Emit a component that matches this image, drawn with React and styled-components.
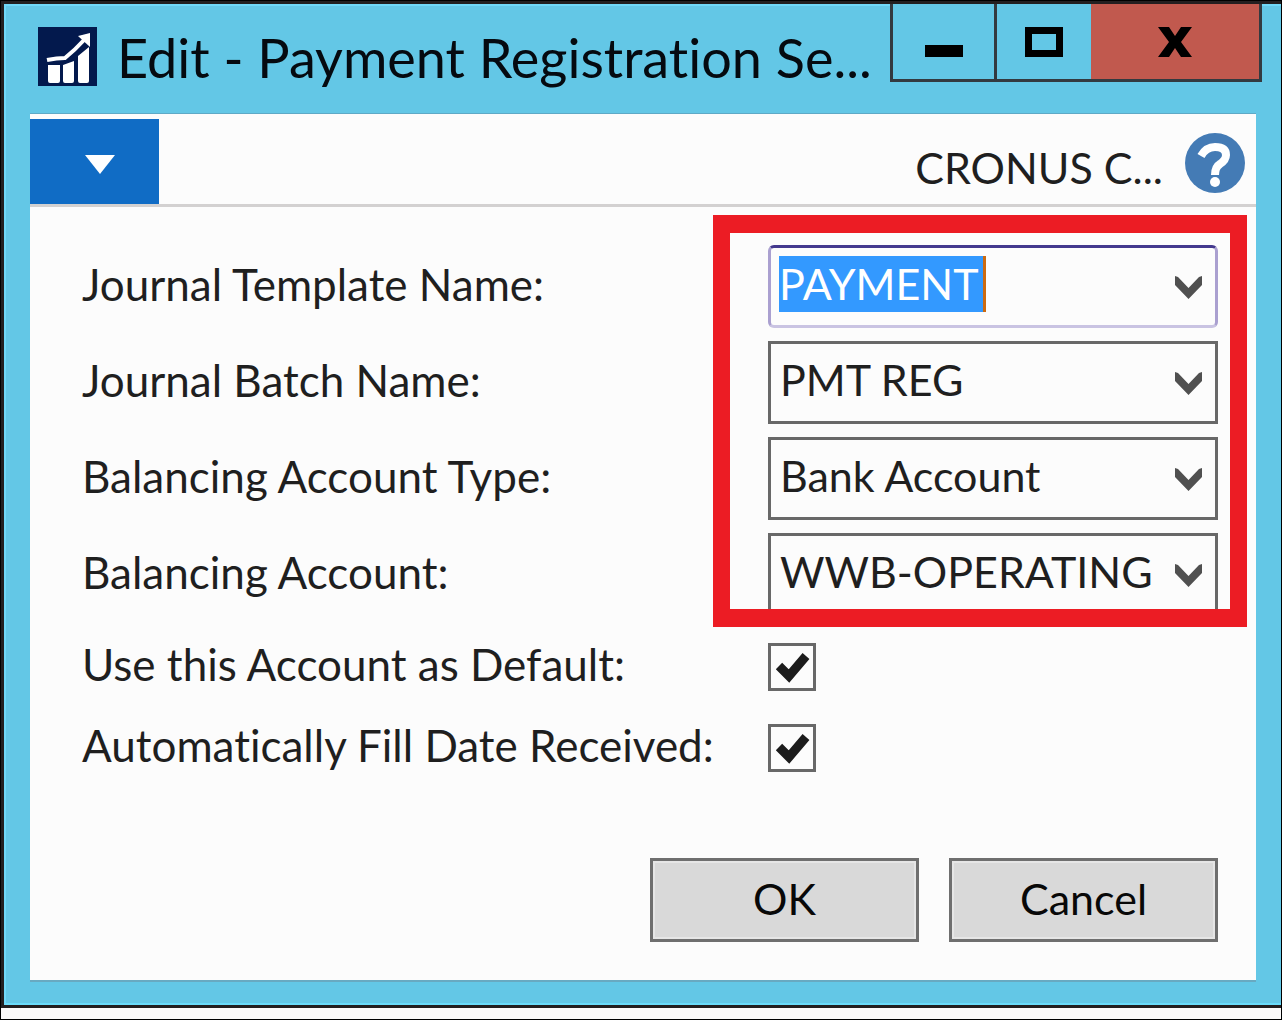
import React, { useState } from "react";
import styled, { createGlobalStyle } from "styled-components";

const GlobalStyle = createGlobalStyle`
  *, *::before, *::after { box-sizing: border-box; }
  body { margin: 0; background: #fbfafa; }
  button, input, select { font: inherit; color: inherit; margin: 0; border-radius: 0; }
  body, button, input, select { font-family: Lato, "Open Sans", sans-serif; font-variant-ligatures: none; }
`;

const Page = styled.main`
  min-height: 100vh;
  display: flex;
  border: 1px solid #000;
  padding-bottom: 11px;
  font-size: 43px;
  line-height: 56px;
  color: #1f1f1f;
`;

const Window = styled.section`
  flex: 1;
  min-width: 0;
  display: flex;
  flex-direction: column;
  background: #63c7e6;
  border: solid #231f20;
  border-width: 3px 0 3px 3px;
  box-shadow: inset 2px 2px #70d8f8, inset 0 -2px #6adcfa;
`;

const TitleBar = styled.header`
  display: flex;
  align-items: flex-start;
  height: 110px;
  padding: 0 19px 0 34px;
`;

const AppIcon = styled.svg`
  flex: none;
  width: 59px;
  height: 59px;
  margin-top: 23px;
`;

const Title = styled.h1`
  flex: 1;
  min-width: 0;
  margin: 0;
  padding: 22px 0 0 20px;
  font-size: 54px;
  font-weight: 400;
  line-height: 64px;
  white-space: nowrap;
  color: #050a10;
`;

const WindowButtons = styled.div`
  flex: none;
  display: flex;
  border: solid #333a40;
  border-width: 0 3px 3px;
`;

const WindowButton = styled.button`
  width: ${(p) => p.$width}px;
  height: 75px;
  padding: 0;
  display: grid;
  place-items: center;
  border: 0;
  border-left: ${(p) => (p.$divided ? "3px solid #333a40" : "0")};
  background: ${(p) => (p.$danger ? "#c1594e" : "#63c7e6")};
`;

const Client = styled.div`
  flex: 1;
  display: flex;
  flex-direction: column;
  margin: 0 25px 25px 26px;
  background: #fcfcfc;
  box-shadow: 0 -1px #5fa9c6, 0 2px #68a9c1;
`;

const Ribbon = styled.div`
  display: flex;
  align-items: center;
  height: 93px;
  padding-right: 11px;
  border-bottom: 3px solid #d3d1d1;
`;

const MenuButton = styled.button`
  width: 129px;
  height: 85px;
  padding: 0 0 4px 10px;
  margin-top: 4px;
  border: 0;
  background: #106cc5;
`;

const Company = styled.span`
  margin-left: auto;
  padding: 18px 22px 0 0;
`;

const HelpButton = styled.button`
  width: 60px;
  height: 60px;
  margin-top: 8px;
  padding: 0;
  border: 0;
  background: none;
`;

const Form = styled.form`
  flex: 1;
  display: flex;
  flex-direction: column;
  padding: 38px 38px 38px 52px;
`;

const Fields = styled.div`
  position: relative;
  display: flex;
  flex-direction: column;
  gap: 13px;
`;

const Highlight = styled.div`
  position: absolute;
  top: -30px;
  right: -29px;
  bottom: -11px;
  width: 534px;
  border: solid #ec1c24;
  border-width: 18px 17px;
  pointer-events: none;
`;

const Row = styled.div`
  display: flex;
  align-items: center;
`;

const Label = styled.label`
  flex: 1;
  padding-bottom: 6px;
  font-size: 44px;
  white-space: nowrap;
`;

const Combo = styled.div`
  position: relative;
  flex: none;
  width: 450px;
  height: 83px;
  border: 3px solid #686868;
  background: #fcfcfc;
`;

const FocusCombo = styled(Combo)`
  display: flex;
  align-items: center;
  padding: 0 7px 6px 8px;
  border-color: #44398e #aaa0d0 #c9c3e2;
  border-radius: 6px;
`;

const Select = styled.select`
  width: 100%;
  height: 100%;
  padding: 0 50px 6px 9px;
  border: 0;
  background: none;
  appearance: none;
  outline: 0;
`;

const ActiveInput = styled.input`
  width: 207px;
  height: 56px;
  padding: 0;
  border: 0;
  border-right: 3px solid #cc6a11;
  background: #3399ff;
  color: #fff;
  outline: 0;
`;

const DropButton = styled.button`
  margin-left: auto;
  width: 40px;
  height: 56px;
  padding: 8px 0 0;
  border: 0;
  background: none;
  display: grid;
  place-items: center;
`;

const Arrow = styled.span`
  position: absolute;
  top: 0;
  right: 7px;
  width: 40px;
  height: 100%;
  padding-top: 3px;
  display: grid;
  place-items: center;
  pointer-events: none;
`;

const Checks = styled.div`
  display: flex;
  flex-direction: column;
  gap: 33px;
  margin-top: 27px;
`;

const CheckRow = styled(Row)`
  height: 48px;
`;

const CheckCell = styled.div`
  flex: none;
  width: 450px;
  display: grid;
  > * { grid-area: 1 / 1; }
`;

const Checkbox = styled.input`
  appearance: none;
  width: 48px;
  height: 48px;
  border: 3px solid #686868;
  background: #fcfcfc;
  &:not(:checked) + svg { visibility: hidden; }
`;

const Tick = styled.svg`
  width: 48px;
  height: 48px;
  pointer-events: none;
`;

const Footer = styled.footer`
  display: flex;
  justify-content: flex-end;
  gap: 30px;
  margin-top: auto;
`;

const ActionButton = styled.button`
  width: 269px;
  height: 84px;
  padding: 0 0 2px;
  border: 3px solid #6f6f6f;
  background: #d9d9d9;
  box-shadow: inset 0 0 0 2px #e6e6e6;
  color: #080808;
`;

function Chevron() {
  return (
    <svg width="27" height="24" viewBox="0 0 27 24" aria-hidden="true">
      <path d="M0 0L3 1L13.500 12L24 1L27 0V9L13.500 23L0 9Z" fill="#505050" />
    </svg>
  );
}

function ComboField({ id, label, options }) {
  return (
    <Row>
      <Label htmlFor={id}>{label}</Label>
      <Combo>
        <Select id={id}>
          {options.map((o) => (
            <option key={o}>{o}</option>
          ))}
        </Select>
        <Arrow><Chevron /></Arrow>
      </Combo>
    </Row>
  );
}

function CheckField({ id, label }) {
  return (
    <CheckRow>
      <Label htmlFor={id}>{label}</Label>
      <CheckCell>
        <Checkbox id={id} type="checkbox" defaultChecked />
        <Tick viewBox="0 0 48 48" aria-hidden="true">
          <path d="M11 23 L21 33 L38 13" fill="none" stroke="#1c1c1c" strokeWidth="9" />
        </Tick>
      </CheckCell>
    </CheckRow>
  );
}

export default function App() {
  const [template, setTemplate] = useState("PAYMENT");
  return (
    <>
      <GlobalStyle />
      <Page>
        <Window>
          <TitleBar>
            <AppIcon viewBox="0 0 59 59" aria-hidden="true">
              <rect width="59" height="59" fill="#03194d" />
              <path d="M10 38 H22 V54 Q22 56 20 56 H12 Q10 56 10 54Z M25 38 L36 34 V54 Q36 56 34 56 H27 Q25 56 25 54Z M40 29 L51 20 V54 Q51 56 49 56 H42 Q40 56 40 54Z" fill="#fff" />
              <path d="M9 33 Q19 31 27 31 Q37 23 47 12" fill="none" stroke="#fff" strokeWidth="4" />
              <path d="M40 9 L52 6 V20Z" fill="#fff" />
            </AppIcon>
            <Title>Edit - Payment Registration Se...</Title>
            <WindowButtons>
              <WindowButton $width={101} aria-label="Minimize">
                <svg width="38" height="40" viewBox="0 0 38 40"><path d="M0 23H38V35H0Z" /></svg>
              </WindowButton>
              <WindowButton $width={97} $divided aria-label="Maximize">
                <svg width="38" height="30" viewBox="0 0 38 30">
                  <path d="M3.500 3.500H34.500V26.500H3.500Z" fill="none" stroke="#000" strokeWidth="7" />
                </svg>
              </WindowButton>
              <WindowButton $width={168} $danger aria-label="Close">
                <svg width="34" height="30" viewBox="0 0 34 30">
                  <path d="M0 0H11L17 9L23 0H34L23 15L34 30H23L17 21L11 30H0L11 15Z" />
                </svg>
              </WindowButton>
            </WindowButtons>
          </TitleBar>
          <Client>
            <Ribbon>
              <MenuButton aria-label="Menu">
                <svg width="30" height="20" viewBox="0 0 30 20"><path d="M0 0H30L15 19Z" fill="#fff" /></svg>
              </MenuButton>
              <Company>CRONUS C...</Company>
              <HelpButton aria-label="Help">
                <svg width="60" height="60" viewBox="0 0 60 60">
                  <circle cx="30" cy="30" r="30" fill="#447bb5" />
                  <path d="M16 23 Q21 14 30 14 Q41 14 41 22 Q41 27 35 31 Q30 34 30 42" fill="none" stroke="#fff" strokeWidth="8" />
                  <circle cx="30" cy="49" r="5" fill="#fff" />
                </svg>
              </HelpButton>
            </Ribbon>
            <Form onSubmit={(e) => e.preventDefault()}>
              <Fields>
                <Row>
                  <Label htmlFor="template">Journal Template Name:</Label>
                  <FocusCombo>
                    <ActiveInput id="template" value={template} onChange={(e) => setTemplate(e.target.value)} />
                    <DropButton type="button" aria-label="Show templates"><Chevron /></DropButton>
                  </FocusCombo>
                </Row>
                <ComboField id="batch" label="Journal Batch Name:" options={["PMT REG"]} />
                <ComboField id="type" label="Balancing Account Type:" options={["Bank Account"]} />
                <ComboField id="account" label="Balancing Account:" options={["WWB-OPERATING"]} />
                <Highlight />
              </Fields>
              <Checks>
                <CheckField id="default" label="Use this Account as Default:" />
                <CheckField id="autofill" label="Automatically Fill Date Received:" />
              </Checks>
              <Footer>
                <ActionButton type="submit">OK</ActionButton>
                <ActionButton type="button">Cancel</ActionButton>
              </Footer>
            </Form>
          </Client>
        </Window>
      </Page>
    </>
  );
}
